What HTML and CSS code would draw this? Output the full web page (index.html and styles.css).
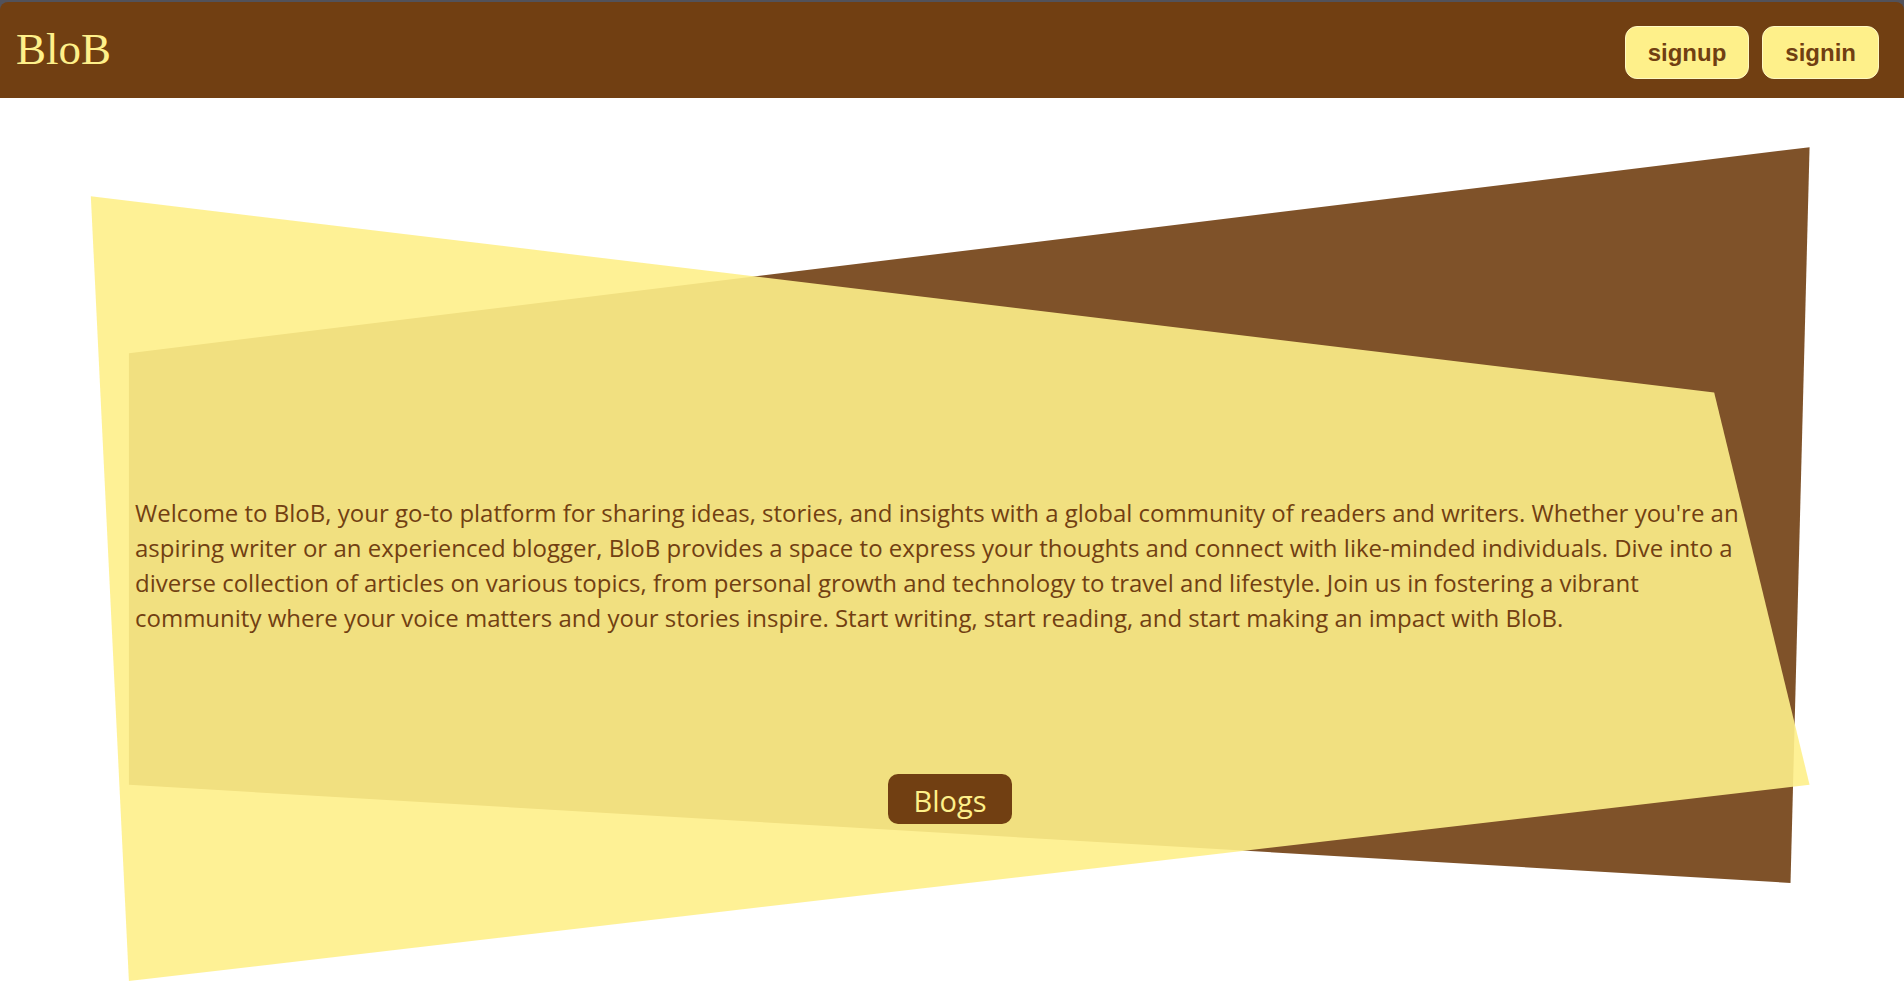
FILE: index.html
```html
<!DOCTYPE html>
<html lang="en">
<head>
<meta charset="utf-8">
<title>BloB</title>
<link rel="stylesheet" href="styles.css">
</head>
<body>
<div class="page">
  <div class="shape shape-brown"></div>
  <div class="shape shape-yellow"></div>
  <div class="topbar">
    <header class="header">
      <a class="brand" href="#">BloB</a>
      <nav class="actions">
        <button class="auth-button" type="button">signup</button>
        <button class="auth-button" type="button">signin</button>
      </nav>
    </header>
  </div>
  <main class="hero">
    <p class="intro">Welcome to BloB, your go-to platform for sharing ideas, stories, and insights with a global community of readers and writers. Whether you're an aspiring writer or an experienced blogger, BloB provides a space to express your thoughts and connect with like-minded individuals. Dive into a diverse collection of articles on various topics, from personal growth and technology to travel and lifestyle. Join us in fostering a vibrant community where your voice matters and your stories inspire. Start writing, start reading, and start making an impact with BloB.</p>
    <button class="blogs-button" type="button">Blogs</button>
  </main>
</div>
</body>
</html>
```

FILE: styles.css
```css
* {
  box-sizing: border-box;
}

body {
  margin: 0;
  background: #fff;
  color: #713f12;
  font-family: "Open Sans", sans-serif;
}

.page {
  position: relative;
  display: flex;
  flex-direction: column;
  min-height: 100vh;
}

/* Two translucent sheets crossing behind the content */
.shape {
  position: absolute;
  inset: 0;
  opacity: 0.9;
}

.shape-brown {
  background: #713f12;
  clip-path: polygon(6.77% 36%, 95.04% 15%, 94.04% 90%, 6.77% 80%);
}

.shape-yellow {
  background: #fef08a;
  clip-path: polygon(4.77% 20%, 90.03% 40%, 95.04% 80%, 6.77% 100%);
}

.topbar {
  position: relative;
  padding-top: 2px;
  background: #52525b;
}

.header {
  display: flex;
  align-items: center;
  justify-content: space-between;
  height: 96px;
  padding: 4px 25px 0 16px;
  background: #713f12;
  border-radius: 8px 8px 0 0;
}

.brand {
  padding-bottom: 6px;
  color: #fef08a;
  font-family: "Liberation Serif", serif;
  font-size: 45px;
  line-height: 52px;
  text-decoration: none;
}

.actions {
  display: flex;
  gap: 13px;
}

.auth-button {
  height: 53px;
  padding: 2px 22px 0;
  border: 1px solid #fef9c3;
  border-radius: 12px;
  background: #fef08a;
  color: #713f12;
  font-family: "Liberation Sans", sans-serif;
  font-size: 24px;
  font-weight: 700;
}

.hero {
  position: relative;
  display: flex;
  flex: 1;
  flex-direction: column;
  align-items: center;
  justify-content: flex-end;
  gap: 139px;
  padding: 0 160px 157px 135px;
}

.intro {
  margin: 0;
  font-size: 24px;
  line-height: 35px;
}

.blogs-button {
  height: 50px;
  margin-left: 21px;
  padding: 2px 25px 0;
  border: 0;
  border-radius: 10px;
  background: #713f12;
  color: #fef08a;
  font-family: inherit;
  font-size: 29px;
}
```
